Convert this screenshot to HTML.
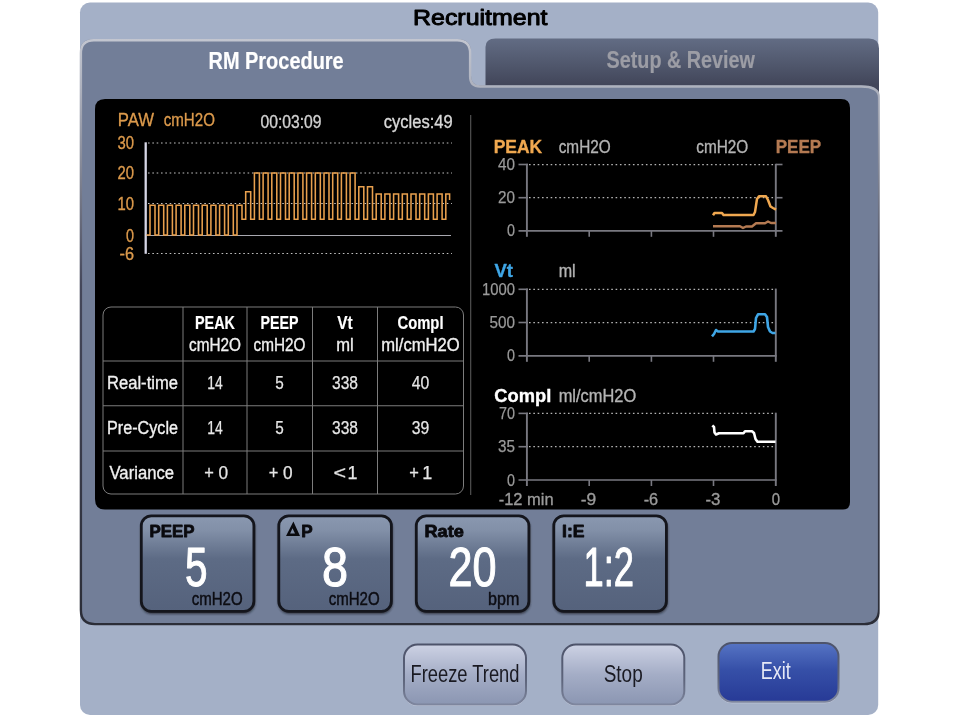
<!DOCTYPE html>
<html><head><meta charset="utf-8"><title>Recruitment</title>
<style>html,body{margin:0;padding:0;background:#fff;}svg{display:block;filter:blur(0.45px);}text{font-family:"Liberation Sans",sans-serif;}</style>
</head><body>
<svg width="960" height="720" viewBox="0 0 960 720">
<defs>
<linearGradient id="gInact" x1="0" y1="0" x2="0" y2="1"><stop offset="0" stop-color="#626c84"/><stop offset="0.45" stop-color="#4f566b"/><stop offset="0.75" stop-color="#42465a"/><stop offset="1" stop-color="#42465a"/></linearGradient>
<linearGradient id="gBtn" x1="0" y1="0" x2="0" y2="1"><stop offset="0" stop-color="#8a98b0"/><stop offset="0.15" stop-color="#8290a8"/><stop offset="0.45" stop-color="#5d6b85"/><stop offset="1" stop-color="#55627c"/></linearGradient>
<linearGradient id="gGrey" x1="0" y1="0" x2="0" y2="1"><stop offset="0" stop-color="#cdd2e4"/><stop offset="0.5" stop-color="#a4adc6"/><stop offset="1" stop-color="#8b96b2"/></linearGradient>
<linearGradient id="gBlue" x1="0" y1="0" x2="0" y2="1"><stop offset="0" stop-color="#5674c4"/><stop offset="0.45" stop-color="#3650a8"/><stop offset="1" stop-color="#273a96"/></linearGradient>
<filter id="fBlur" x="-10%" y="-10%" width="120%" height="120%"><feGaussianBlur stdDeviation="1.3"/></filter>
<linearGradient id="gBord" x1="0" y1="0" x2="0" y2="1"><stop offset="0" stop-color="#4d536a"/><stop offset="0.6" stop-color="#5e657c"/><stop offset="1" stop-color="#7e869e"/></linearGradient>
</defs>
<rect x="80" y="2.5" width="798.2" height="712.5" rx="10" ry="10" fill="#a4b0c7"/>
<text x="413" y="25" font-size="21.5" font-weight="normal" fill="#000" text-anchor="start" textLength="134.5" lengthAdjust="spacingAndGlyphs" stroke="#000" stroke-width="0.95" stroke-linejoin="round">Recruitment</text>
<path d="M485.5 84 V47 Q485.5 38.5 495.5 38.5 H869 Q879 38.5 879 48.5 V100 H485.5 Z" fill="url(#gInact)"/>
<text x="606.5" y="67.5" font-size="23" font-weight="bold" fill="#9c9da5" text-anchor="start" textLength="148.5" lengthAdjust="spacingAndGlyphs" stroke="#9c9da5" stroke-width="0.2" stroke-linejoin="round">Setup &amp; Review</text>
<path d="M80 52.3 Q80 39.3 93 39.3 H458 Q471 39.3 471 52.3 V75.6 Q471 85.6 481 85.6 H861.3 Q879.3 85.6 879.3 96.6 V610 Q879.3 625 864.3 625 H94 Q80 625 80 611 Z" fill="#727e98"/>
<linearGradient id="gEdge" gradientUnits="userSpaceOnUse" x1="0" y1="39" x2="0" y2="625"><stop offset="0" stop-color="#c3c6d0"/><stop offset="0.08" stop-color="#aeb2be"/><stop offset="0.2" stop-color="#8a8e9c"/><stop offset="0.42" stop-color="#44475a"/><stop offset="1" stop-color="#2b2d37"/></linearGradient>
<clipPath id="cBody"><rect x="0" y="0" width="879.6" height="720"/></clipPath>
<path d="M80.9 53.199999999999996 Q80.9 40.199999999999996 93.9 40.199999999999996 H457.1 Q470.1 40.199999999999996 470.1 53.199999999999996 V76.5 Q470.1 86.5 480.1 86.5 H861.0999999999999 Q879.0999999999999 86.5 879.0999999999999 97.5 V609.1 Q879.0999999999999 624.1 864.0999999999999 624.1 H94.9 Q80.9 624.1 80.9 610.1 Z" fill="none" stroke="url(#gEdge)" stroke-width="2.4" clip-path="url(#cBody)"/>
<text x="208.5" y="68.7" font-size="23.5" font-weight="bold" fill="#fff" text-anchor="start" textLength="135.2" lengthAdjust="spacingAndGlyphs" stroke="#fff" stroke-width="0.2" stroke-linejoin="round">RM Procedure</text>
<path d="M95 109 Q95 99 105 99 H841 Q850 99 850 108 V502 Q850 509.6 843 509.6 H105 Q95 509.6 95 499 Z" fill="#000"/>
<text x="117.8" y="126.3" font-size="18.3" font-weight="normal" fill="#dc9a4c" text-anchor="start" textLength="36.2" lengthAdjust="spacingAndGlyphs" stroke="#dc9a4c" stroke-width="0.35" stroke-linejoin="round">PAW</text>
<text x="163.7" y="126.3" font-size="18.3" font-weight="normal" fill="#dc9a4c" text-anchor="start" textLength="51.2" lengthAdjust="spacingAndGlyphs" stroke="#dc9a4c" stroke-width="0.35" stroke-linejoin="round">cmH2O</text>
<text x="260.5" y="127.8" font-size="18" font-weight="normal" fill="#d2d2d2" text-anchor="start" textLength="61" lengthAdjust="spacingAndGlyphs" stroke="#d2d2d2" stroke-width="0.35" stroke-linejoin="round">00:03:09</text>
<text x="383.7" y="127.8" font-size="18" font-weight="normal" fill="#d8d8d8" text-anchor="start" textLength="69" lengthAdjust="spacingAndGlyphs" stroke="#d8d8d8" stroke-width="0.35" stroke-linejoin="round">cycles:49</text>
<text x="117.5" y="149" font-size="17.8" stroke="#dc9a4c" stroke-width="0.35" fill="#dc9a4c" textLength="16.5" lengthAdjust="spacingAndGlyphs">30</text>
<text x="117.5" y="179" font-size="17.8" stroke="#dc9a4c" stroke-width="0.35" fill="#dc9a4c" textLength="16.5" lengthAdjust="spacingAndGlyphs">20</text>
<text x="117.5" y="209.5" font-size="17.8" stroke="#dc9a4c" stroke-width="0.35" fill="#dc9a4c" textLength="16.5" lengthAdjust="spacingAndGlyphs">10</text>
<text x="126" y="242" font-size="17.8" stroke="#dc9a4c" stroke-width="0.35" fill="#dc9a4c" textLength="8" lengthAdjust="spacingAndGlyphs">0</text>
<text x="119.5" y="259.5" font-size="17.8" stroke="#dc9a4c" stroke-width="0.35" fill="#dc9a4c" textLength="14.5" lengthAdjust="spacingAndGlyphs">-6</text>
<line x1="148" x2="452" y1="143" y2="143" stroke="#c0c0c0" stroke-width="1.2" stroke-dasharray="1.6 2.73"/>
<line x1="148" x2="452" y1="173" y2="173" stroke="#c0c0c0" stroke-width="1.2" stroke-dasharray="1.6 2.73"/>
<line x1="148" x2="452" y1="203.5" y2="203.5" stroke="#c0c0c0" stroke-width="1.2" stroke-dasharray="1.6 2.73"/>
<line x1="148" x2="452" y1="253.5" y2="253.5" stroke="#c0c0c0" stroke-width="1.2" stroke-dasharray="1.6 2.73"/>
<line x1="146" x2="451" y1="235.5" y2="235.5" stroke="#a8a8b0" stroke-width="1.2"/>
<line x1="145.7" x2="145.7" y1="142.3" y2="253.8" stroke="#d6d6e6" stroke-width="2.3"/>
<path d="M146.5 235 H150.00 V205.3 H155.00 V235 H158.70 V205.3 H163.70 V235 H167.40 V205.3 H172.40 V235 H176.10 V205.3 H181.10 V235 H184.80 V205.3 H189.80 V235 H193.50 V205.3 H198.50 V235 H202.20 V205.3 H207.20 V235 H210.90 V205.3 H215.90 V235 H219.60 V205.3 H224.60 V235 H228.30 V205.3 H233.30 V235 H237.00 V205.3 H242.00 V219.3 H245.70 V191.7 H250.70 V219.3 H254.40 V173 H259.40 V219.3 H263.10 V173 H268.10 V219.3 H271.80 V173 H276.80 V219.3 H280.50 V173 H285.50 V219.3 H289.20 V173 H294.20 V219.3 H297.90 V173 H302.90 V219.3 H306.60 V173 H311.60 V219.3 H315.30 V173 H320.30 V219.3 H324.00 V173 H329.00 V219.3 H332.70 V173 H337.70 V219.3 H341.40 V173 H346.40 V219.3 H350.10 V173 H355.10 V219.3 H358.80 V186.7 H363.80 V219.3 H367.50 V186.7 H372.50 V219.3 H376.20 V194 H381.20 V219.3 H384.90 V194 H389.90 V219.3 H393.60 V194 H398.60 V219.3 H402.30 V194 H407.30 V219.3 H411.00 V194 H416.00 V219.3 H419.70 V194 H424.70 V219.3 H428.40 V194 H433.40 V219.3 H437.10 V194 H442.10 V219.3 H445.80 V194 H449.6 V200" fill="none" stroke="#e8a04e" stroke-width="1.55" stroke-linejoin="miter"/>
<line x1="470.7" x2="470.7" y1="115" y2="495" stroke="#585858" stroke-width="1.1"/>
<rect x="103" y="307" width="360.5" height="187" rx="8" ry="8" fill="none" stroke="#7c7c7c" stroke-width="1"/>
<line x1="183" x2="183" y1="307" y2="494" stroke="#7c7c7c" stroke-width="1"/>
<line x1="247" x2="247" y1="307" y2="494" stroke="#7c7c7c" stroke-width="1"/>
<line x1="312.5" x2="312.5" y1="307" y2="494" stroke="#7c7c7c" stroke-width="1"/>
<line x1="377.5" x2="377.5" y1="307" y2="494" stroke="#7c7c7c" stroke-width="1"/>
<line x1="103" x2="463.5" y1="361" y2="361" stroke="#7c7c7c" stroke-width="1"/>
<line x1="103" x2="463.5" y1="405.75" y2="405.75" stroke="#7c7c7c" stroke-width="1"/>
<line x1="103" x2="463.5" y1="451" y2="451" stroke="#7c7c7c" stroke-width="1"/>
<text x="195.0" y="328.7" font-size="18.6" font-weight="bold" fill="#fff" text-anchor="start" textLength="40" lengthAdjust="spacingAndGlyphs" stroke="#fff" stroke-width="0.2" stroke-linejoin="round">PEAK</text>
<text x="260.5" y="328.7" font-size="18.6" font-weight="bold" fill="#fff" text-anchor="start" textLength="38" lengthAdjust="spacingAndGlyphs" stroke="#fff" stroke-width="0.2" stroke-linejoin="round">PEEP</text>
<text x="337.25" y="328.7" font-size="18.6" font-weight="bold" fill="#fff" text-anchor="start" textLength="15.5" lengthAdjust="spacingAndGlyphs" stroke="#fff" stroke-width="0.2" stroke-linejoin="round">Vt</text>
<text x="397.5" y="328.7" font-size="18.6" font-weight="bold" fill="#fff" text-anchor="start" textLength="46" lengthAdjust="spacingAndGlyphs" stroke="#fff" stroke-width="0.2" stroke-linejoin="round">Compl</text>
<text x="189.0" y="351" font-size="18.3" font-weight="normal" fill="#f0f0f0" text-anchor="start" textLength="52" lengthAdjust="spacingAndGlyphs" stroke="#f0f0f0" stroke-width="0.35" stroke-linejoin="round">cmH2O</text>
<text x="253.5" y="351" font-size="18.3" font-weight="normal" fill="#f0f0f0" text-anchor="start" textLength="52" lengthAdjust="spacingAndGlyphs" stroke="#f0f0f0" stroke-width="0.35" stroke-linejoin="round">cmH2O</text>
<text x="336.25" y="351" font-size="18.3" font-weight="normal" fill="#f0f0f0" text-anchor="start" textLength="17.5" lengthAdjust="spacingAndGlyphs" stroke="#f0f0f0" stroke-width="0.35" stroke-linejoin="round">ml</text>
<text x="381.25" y="351" font-size="18.3" font-weight="normal" fill="#f0f0f0" text-anchor="start" textLength="78.5" lengthAdjust="spacingAndGlyphs" stroke="#f0f0f0" stroke-width="0.35" stroke-linejoin="round">ml/cmH2O</text>
<text x="107" y="389" font-size="18.3" font-weight="normal" fill="#f0f0f0" text-anchor="start" textLength="71" lengthAdjust="spacingAndGlyphs" stroke="#f0f0f0" stroke-width="0.35" stroke-linejoin="round">Real-time</text>
<text x="207.25" y="389" font-size="18.3" font-weight="normal" fill="#e6e6e6" text-anchor="start" textLength="15.5" lengthAdjust="spacingAndGlyphs" stroke="#e6e6e6" stroke-width="0.25" stroke-linejoin="round">14</text>
<text x="275.25" y="389" font-size="18.3" font-weight="normal" fill="#e6e6e6" text-anchor="start" textLength="8.5" lengthAdjust="spacingAndGlyphs" stroke="#e6e6e6" stroke-width="0.25" stroke-linejoin="round">5</text>
<text x="332.0" y="389" font-size="18.3" font-weight="normal" fill="#e6e6e6" text-anchor="start" textLength="26" lengthAdjust="spacingAndGlyphs" stroke="#e6e6e6" stroke-width="0.25" stroke-linejoin="round">338</text>
<text x="411.75" y="389" font-size="18.3" font-weight="normal" fill="#e6e6e6" text-anchor="start" textLength="17.5" lengthAdjust="spacingAndGlyphs" stroke="#e6e6e6" stroke-width="0.25" stroke-linejoin="round">40</text>
<text x="107" y="433.7" font-size="18.3" font-weight="normal" fill="#f0f0f0" text-anchor="start" textLength="71" lengthAdjust="spacingAndGlyphs" stroke="#f0f0f0" stroke-width="0.35" stroke-linejoin="round">Pre-Cycle</text>
<text x="207.25" y="433.7" font-size="18.3" font-weight="normal" fill="#e6e6e6" text-anchor="start" textLength="15.5" lengthAdjust="spacingAndGlyphs" stroke="#e6e6e6" stroke-width="0.25" stroke-linejoin="round">14</text>
<text x="275.25" y="433.7" font-size="18.3" font-weight="normal" fill="#e6e6e6" text-anchor="start" textLength="8.5" lengthAdjust="spacingAndGlyphs" stroke="#e6e6e6" stroke-width="0.25" stroke-linejoin="round">5</text>
<text x="332.0" y="433.7" font-size="18.3" font-weight="normal" fill="#e6e6e6" text-anchor="start" textLength="26" lengthAdjust="spacingAndGlyphs" stroke="#e6e6e6" stroke-width="0.25" stroke-linejoin="round">338</text>
<text x="411.75" y="433.7" font-size="18.3" font-weight="normal" fill="#e6e6e6" text-anchor="start" textLength="17.5" lengthAdjust="spacingAndGlyphs" stroke="#e6e6e6" stroke-width="0.25" stroke-linejoin="round">39</text>
<text x="109.5" y="479" font-size="18.3" font-weight="normal" fill="#f0f0f0" text-anchor="start" textLength="64.5" lengthAdjust="spacingAndGlyphs" stroke="#f0f0f0" stroke-width="0.35" stroke-linejoin="round">Variance</text>
<text x="204.2" y="479.2" font-size="18.3" font-weight="normal" fill="#e6e6e6" text-anchor="start" textLength="9.6" lengthAdjust="spacingAndGlyphs" stroke="#e6e6e6" stroke-width="0.25" stroke-linejoin="round">+</text>
<text x="218.4" y="479.2" font-size="18.3" font-weight="normal" fill="#e6e6e6" text-anchor="start" textLength="9.6" lengthAdjust="spacingAndGlyphs" stroke="#e6e6e6" stroke-width="0.25" stroke-linejoin="round">0</text>
<text x="268.7" y="479.2" font-size="18.3" font-weight="normal" fill="#e6e6e6" text-anchor="start" textLength="9.6" lengthAdjust="spacingAndGlyphs" stroke="#e6e6e6" stroke-width="0.25" stroke-linejoin="round">+</text>
<text x="282.9" y="479.2" font-size="18.3" font-weight="normal" fill="#e6e6e6" text-anchor="start" textLength="9.6" lengthAdjust="spacingAndGlyphs" stroke="#e6e6e6" stroke-width="0.25" stroke-linejoin="round">0</text>
<text x="333.6" y="479.2" font-size="18.3" font-weight="normal" fill="#e6e6e6" text-anchor="start" textLength="12.6" lengthAdjust="spacingAndGlyphs" stroke="#e6e6e6" stroke-width="0.25" stroke-linejoin="round">&lt;</text>
<text x="347.6" y="479.2" font-size="18.3" font-weight="normal" fill="#e6e6e6" text-anchor="start" textLength="10" lengthAdjust="spacingAndGlyphs" stroke="#e6e6e6" stroke-width="0.25" stroke-linejoin="round">1</text>
<text x="409.2" y="479.2" font-size="18.3" font-weight="normal" fill="#e6e6e6" text-anchor="start" textLength="9.6" lengthAdjust="spacingAndGlyphs" stroke="#e6e6e6" stroke-width="0.25" stroke-linejoin="round">+</text>
<text x="422.3" y="479.2" font-size="18.3" font-weight="normal" fill="#e6e6e6" text-anchor="start" textLength="10" lengthAdjust="spacingAndGlyphs" stroke="#e6e6e6" stroke-width="0.25" stroke-linejoin="round">1</text>
<line x1="529" x2="776" y1="164.5" y2="164.5" stroke="#b4b4b4" stroke-width="1.25" stroke-dasharray="1.6 2.73"/>
<line x1="518.5" x2="528" y1="164.5" y2="164.5" stroke="#787880" stroke-width="1.6"/>
<line x1="529" x2="776" y1="197.7" y2="197.7" stroke="#b4b4b4" stroke-width="1.25" stroke-dasharray="1.6 2.73"/>
<line x1="518.5" x2="528" y1="197.7" y2="197.7" stroke="#787880" stroke-width="1.6"/>
<line x1="518.5" x2="782.5" y1="230.8" y2="230.8" stroke="#787880" stroke-width="1.7"/>
<line x1="526.9" x2="526.9" y1="163.8" y2="236.8" stroke="#787880" stroke-width="1.9"/>
<line x1="775.8" x2="775.8" y1="163.8" y2="236.8" stroke="#787880" stroke-width="1.9"/>
<line x1="589.2" x2="589.2" y1="230.8" y2="236.8" stroke="#787880" stroke-width="1.6"/>
<line x1="651.4" x2="651.4" y1="230.8" y2="236.8" stroke="#787880" stroke-width="1.6"/>
<line x1="713.5" x2="713.5" y1="230.8" y2="236.8" stroke="#787880" stroke-width="1.6"/>
<line x1="776" x2="782.5" y1="164.5" y2="164.5" stroke="#787880" stroke-width="1.6"/>
<line x1="776" x2="782.5" y1="197.7" y2="197.7" stroke="#787880" stroke-width="1.6"/>
<text x="498" y="170.0" font-size="17.3" font-weight="normal" fill="#9a9a9a" text-anchor="start" textLength="17" lengthAdjust="spacingAndGlyphs" stroke="#9a9a9a" stroke-width="0.25" stroke-linejoin="round">40</text>
<text x="498" y="203.2" font-size="17.3" font-weight="normal" fill="#9a9a9a" text-anchor="start" textLength="17" lengthAdjust="spacingAndGlyphs" stroke="#9a9a9a" stroke-width="0.25" stroke-linejoin="round">20</text>
<text x="507" y="236.3" font-size="17.3" font-weight="normal" fill="#9a9a9a" text-anchor="start" textLength="8" lengthAdjust="spacingAndGlyphs" stroke="#9a9a9a" stroke-width="0.25" stroke-linejoin="round">0</text>
<line x1="529" x2="776" y1="289.3" y2="289.3" stroke="#b4b4b4" stroke-width="1.25" stroke-dasharray="1.6 2.73"/>
<line x1="518.5" x2="528" y1="289.3" y2="289.3" stroke="#787880" stroke-width="1.6"/>
<line x1="529" x2="776" y1="322.5" y2="322.5" stroke="#b4b4b4" stroke-width="1.25" stroke-dasharray="1.6 2.73"/>
<line x1="518.5" x2="528" y1="322.5" y2="322.5" stroke="#787880" stroke-width="1.6"/>
<line x1="518.5" x2="776.6" y1="355.8" y2="355.8" stroke="#787880" stroke-width="1.7"/>
<line x1="526.9" x2="526.9" y1="288.6" y2="361.8" stroke="#787880" stroke-width="1.9"/>
<line x1="775.8" x2="775.8" y1="288.6" y2="361.8" stroke="#787880" stroke-width="1.9"/>
<line x1="589.2" x2="589.2" y1="355.8" y2="361.8" stroke="#787880" stroke-width="1.6"/>
<line x1="651.4" x2="651.4" y1="355.8" y2="361.8" stroke="#787880" stroke-width="1.6"/>
<line x1="713.5" x2="713.5" y1="355.8" y2="361.8" stroke="#787880" stroke-width="1.6"/>
<text x="482" y="294.8" font-size="17.3" font-weight="normal" fill="#9a9a9a" text-anchor="start" textLength="33" lengthAdjust="spacingAndGlyphs" stroke="#9a9a9a" stroke-width="0.25" stroke-linejoin="round">1000</text>
<text x="489.5" y="328.0" font-size="17.3" font-weight="normal" fill="#9a9a9a" text-anchor="start" textLength="25.5" lengthAdjust="spacingAndGlyphs" stroke="#9a9a9a" stroke-width="0.25" stroke-linejoin="round">500</text>
<text x="507" y="361.3" font-size="17.3" font-weight="normal" fill="#9a9a9a" text-anchor="start" textLength="8" lengthAdjust="spacingAndGlyphs" stroke="#9a9a9a" stroke-width="0.25" stroke-linejoin="round">0</text>
<line x1="529" x2="776" y1="413.4" y2="413.4" stroke="#b4b4b4" stroke-width="1.25" stroke-dasharray="1.6 2.73"/>
<line x1="518.5" x2="528" y1="413.4" y2="413.4" stroke="#787880" stroke-width="1.6"/>
<line x1="529" x2="776" y1="446.7" y2="446.7" stroke="#b4b4b4" stroke-width="1.25" stroke-dasharray="1.6 2.73"/>
<line x1="518.5" x2="528" y1="446.7" y2="446.7" stroke="#787880" stroke-width="1.6"/>
<line x1="518.5" x2="776.6" y1="480" y2="480" stroke="#787880" stroke-width="1.7"/>
<line x1="526.9" x2="526.9" y1="412.7" y2="486" stroke="#787880" stroke-width="1.9"/>
<line x1="775.8" x2="775.8" y1="412.7" y2="486" stroke="#787880" stroke-width="1.9"/>
<line x1="589.2" x2="589.2" y1="480" y2="486" stroke="#787880" stroke-width="1.6"/>
<line x1="651.4" x2="651.4" y1="480" y2="486" stroke="#787880" stroke-width="1.6"/>
<line x1="713.5" x2="713.5" y1="480" y2="486" stroke="#787880" stroke-width="1.6"/>
<text x="499" y="418.9" font-size="17.3" font-weight="normal" fill="#9a9a9a" text-anchor="start" textLength="16" lengthAdjust="spacingAndGlyphs" stroke="#9a9a9a" stroke-width="0.25" stroke-linejoin="round">70</text>
<text x="498" y="452.2" font-size="17.3" font-weight="normal" fill="#9a9a9a" text-anchor="start" textLength="17" lengthAdjust="spacingAndGlyphs" stroke="#9a9a9a" stroke-width="0.25" stroke-linejoin="round">35</text>
<text x="507" y="485.5" font-size="17.3" font-weight="normal" fill="#9a9a9a" text-anchor="start" textLength="8" lengthAdjust="spacingAndGlyphs" stroke="#9a9a9a" stroke-width="0.25" stroke-linejoin="round">0</text>
<text x="493.7" y="153" font-size="17.6" font-weight="bold" fill="#f0a850" text-anchor="start" textLength="48.5" lengthAdjust="spacingAndGlyphs" stroke="#f0a850" stroke-width="0.35" stroke-linejoin="round">PEAK</text>
<text x="558.7" y="153" font-size="17.6" font-weight="normal" fill="#b4b4b4" text-anchor="start" textLength="52" lengthAdjust="spacingAndGlyphs" stroke="#b4b4b4" stroke-width="0.35" stroke-linejoin="round">cmH2O</text>
<text x="696.3" y="153" font-size="17.6" font-weight="normal" fill="#b4b4b4" text-anchor="start" textLength="52" lengthAdjust="spacingAndGlyphs" stroke="#b4b4b4" stroke-width="0.35" stroke-linejoin="round">cmH2O</text>
<text x="775.7" y="153" font-size="17.6" font-weight="bold" fill="#b47a52" text-anchor="start" textLength="45.5" lengthAdjust="spacingAndGlyphs" stroke="#b47a52" stroke-width="0.35" stroke-linejoin="round">PEEP</text>
<text x="494.5" y="277.3" font-size="17.6" font-weight="bold" fill="#3fa6e6" text-anchor="start" textLength="18.5" lengthAdjust="spacingAndGlyphs" stroke="#3fa6e6" stroke-width="0.35" stroke-linejoin="round">Vt</text>
<text x="558.7" y="277.3" font-size="17.6" font-weight="normal" fill="#b4b4b4" text-anchor="start" textLength="17" lengthAdjust="spacingAndGlyphs" stroke="#b4b4b4" stroke-width="0.35" stroke-linejoin="round">ml</text>
<text x="494.3" y="402" font-size="17.6" font-weight="bold" fill="#fff" text-anchor="start" textLength="57" lengthAdjust="spacingAndGlyphs" stroke="#fff" stroke-width="0.35" stroke-linejoin="round">Compl</text>
<text x="558.7" y="402" font-size="17.6" font-weight="normal" fill="#b4b4b4" text-anchor="start" textLength="77.5" lengthAdjust="spacingAndGlyphs" stroke="#b4b4b4" stroke-width="0.35" stroke-linejoin="round">ml/cmH2O</text>
<path d="M713 215.3 L714.5 213 H722 L723.5 215 H753.5 L755 212 L757 199 L759 196.3 H766 L768 200 L770.5 206.5 L773 208 L776 209.7" fill="none" stroke="#f0a850" stroke-width="2.5" stroke-linejoin="round"/>
<path d="M713 226.3 H740 L743 228 L746 226.5 H752 L756 223.3 H765 L768 221.5 L771 223 H776" fill="none" stroke="#b47a52" stroke-width="2.4" stroke-linejoin="round"/>
<path d="M712 336.3 L714 334 L716 330 L718 331.5 H753.5 L755 329 L756 318 L758 314.3 H765 L767 317 L768 327 L770 331.5 L772.5 333 H775.5" fill="none" stroke="#3fa6e6" stroke-width="2.6" stroke-linejoin="round"/>
<path d="M712.3 425.5 L714 427 L714.5 432.5 L716 434.5 L719 433.2 H743.5 L745 431.3 H752 L754 433 L755.5 439 L757.5 441.8 H775.5" fill="none" stroke="#fff" stroke-width="2.6" stroke-linejoin="round"/>
<text x="498.7" y="505" font-size="17.3" font-weight="normal" fill="#9a9a9a" text-anchor="start" textLength="55" lengthAdjust="spacingAndGlyphs" stroke="#9a9a9a" stroke-width="0.35" stroke-linejoin="round">-12 min</text>
<text x="580.7" y="505" font-size="17.3" font-weight="normal" fill="#9a9a9a" text-anchor="start" textLength="15.5" lengthAdjust="spacingAndGlyphs" stroke="#9a9a9a" stroke-width="0.35" stroke-linejoin="round">-9</text>
<text x="643.7" y="505" font-size="17.3" font-weight="normal" fill="#9a9a9a" text-anchor="start" textLength="14.5" lengthAdjust="spacingAndGlyphs" stroke="#9a9a9a" stroke-width="0.35" stroke-linejoin="round">-6</text>
<text x="705.5" y="505" font-size="17.3" font-weight="normal" fill="#9a9a9a" text-anchor="start" textLength="15" lengthAdjust="spacingAndGlyphs" stroke="#9a9a9a" stroke-width="0.35" stroke-linejoin="round">-3</text>
<text x="771.7" y="505" font-size="17.3" font-weight="normal" fill="#9a9a9a" text-anchor="start" textLength="8.3" lengthAdjust="spacingAndGlyphs" stroke="#9a9a9a" stroke-width="0.35" stroke-linejoin="round">0</text>
<rect x="140.8" y="517" width="114.4" height="97" rx="11" ry="11" fill="#20222c" opacity="0.75" filter="url(#fBlur)"/>
<rect x="141.3" y="515.9" width="112.6" height="95.4" rx="10" ry="10" fill="url(#gBtn)" stroke="#14151c" stroke-width="2.8"/>
<text x="149.5" y="536.8" font-size="17" font-weight="bold" fill="#0a0a0e" text-anchor="start" textLength="45" lengthAdjust="spacingAndGlyphs" stroke="#0a0a0e" stroke-width="0.8" stroke-linejoin="round">PEEP</text>
<text x="185" y="585.7" font-size="55.8" font-weight="normal" fill="#fff" text-anchor="start" textLength="22.5" lengthAdjust="spacingAndGlyphs" stroke="#fff" stroke-width="1.1" stroke-linejoin="round">5</text>
<text x="191.7" y="605" font-size="18" font-weight="normal" fill="#0c0c12" text-anchor="start" textLength="51" lengthAdjust="spacingAndGlyphs" stroke="#0c0c12" stroke-width="0.45" stroke-linejoin="round">cmH2O</text>
<rect x="278.3" y="517" width="114.4" height="97" rx="11" ry="11" fill="#20222c" opacity="0.75" filter="url(#fBlur)"/>
<rect x="278.8" y="515.9" width="112.6" height="95.4" rx="10" ry="10" fill="url(#gBtn)" stroke="#14151c" stroke-width="2.8"/>
<path d="M293.4 521.5 L300 536 H286 Z M292.5 528.2 L290.1 533.6 H295 Z" fill="#0a0a0e" fill-rule="evenodd"/>
<text x="301.2" y="537" font-size="17" font-weight="bold" fill="#0a0a0e" text-anchor="start" textLength="11.4" lengthAdjust="spacingAndGlyphs" stroke="#0a0a0e" stroke-width="0.8" stroke-linejoin="round">P</text>
<text x="322" y="585.7" font-size="55.8" font-weight="normal" fill="#fff" text-anchor="start" textLength="26" lengthAdjust="spacingAndGlyphs" stroke="#fff" stroke-width="1.1" stroke-linejoin="round">8</text>
<text x="328.7" y="605" font-size="18" font-weight="normal" fill="#0c0c12" text-anchor="start" textLength="51" lengthAdjust="spacingAndGlyphs" stroke="#0c0c12" stroke-width="0.45" stroke-linejoin="round">cmH2O</text>
<rect x="415.8" y="517" width="114.4" height="97" rx="11" ry="11" fill="#20222c" opacity="0.75" filter="url(#fBlur)"/>
<rect x="416.3" y="515.9" width="112.6" height="95.4" rx="10" ry="10" fill="url(#gBtn)" stroke="#14151c" stroke-width="2.8"/>
<text x="424.5" y="536.8" font-size="17" font-weight="bold" fill="#0a0a0e" text-anchor="start" textLength="39.3" lengthAdjust="spacingAndGlyphs" stroke="#0a0a0e" stroke-width="0.8" stroke-linejoin="round">Rate</text>
<text x="448.5" y="585.7" font-size="55.8" font-weight="normal" fill="#fff" text-anchor="start" textLength="48" lengthAdjust="spacingAndGlyphs" stroke="#fff" stroke-width="1.1" stroke-linejoin="round">20</text>
<text x="488" y="605" font-size="18" font-weight="normal" fill="#0c0c12" text-anchor="start" textLength="31.3" lengthAdjust="spacingAndGlyphs" stroke="#0c0c12" stroke-width="0.45" stroke-linejoin="round">bpm</text>
<rect x="553.3" y="517" width="114.4" height="97" rx="11" ry="11" fill="#20222c" opacity="0.75" filter="url(#fBlur)"/>
<rect x="553.8" y="515.9" width="112.6" height="95.4" rx="10" ry="10" fill="url(#gBtn)" stroke="#14151c" stroke-width="2.8"/>
<text x="562" y="536.8" font-size="17" font-weight="bold" fill="#0a0a0e" text-anchor="start" textLength="22.5" lengthAdjust="spacingAndGlyphs" stroke="#0a0a0e" stroke-width="0.8" stroke-linejoin="round">I:E</text>
<text x="583.5" y="585.7" font-size="55.8" font-weight="normal" fill="#fff" text-anchor="start" textLength="50.5" lengthAdjust="spacingAndGlyphs" stroke="#fff" stroke-width="1.1" stroke-linejoin="round">1:2</text>
<rect x="403.7" y="646.1" width="122.6" height="60" rx="14" ry="14" fill="#d3d8e6" opacity="0.85"/>
<rect x="404" y="644.5" width="122" height="60" rx="13.5" ry="13.5" fill="url(#gGrey)" stroke="url(#gBord)" stroke-width="2"/>
<text x="410.5" y="681.7" font-size="23.5" font-weight="normal" fill="#1a1a22" text-anchor="start" textLength="109" lengthAdjust="spacingAndGlyphs">Freeze Trend</text>
<rect x="562.0" y="646.1" width="122.6" height="60" rx="14" ry="14" fill="#d3d8e6" opacity="0.85"/>
<rect x="562.3" y="644.5" width="122" height="60" rx="13.5" ry="13.5" fill="url(#gGrey)" stroke="url(#gBord)" stroke-width="2"/>
<text x="603.7" y="682" font-size="23.5" font-weight="normal" fill="#1a1a22" text-anchor="start" textLength="39" lengthAdjust="spacingAndGlyphs">Stop</text>
<rect x="718.2" y="644.6" width="120.6" height="58.7" rx="14" ry="14" fill="#d3d8e6" opacity="0.85"/>
<rect x="718.5" y="643" width="120" height="58.7" rx="13.5" ry="13.5" fill="url(#gBlue)" stroke="url(#gBord)" stroke-width="2"/>
<text x="760.7" y="679.3" font-size="23.5" font-weight="normal" fill="#e6e9f6" text-anchor="start" textLength="30" lengthAdjust="spacingAndGlyphs">Exit</text>
</svg></body></html>
